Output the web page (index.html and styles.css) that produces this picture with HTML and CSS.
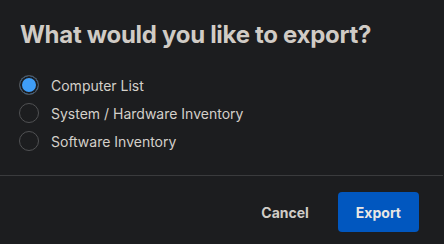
FILE: index.html
```html
<!DOCTYPE html>
<html>
<head>
<meta charset="utf-8">
<link rel="stylesheet" href="styles.css">
</head>
<body>
<div class="dialog">
  <div class="body">
    <h1 class="title">What would you like to export?</h1>
    <div class="options">
      <label class="option"><span class="radio checked"></span><span class="label">Computer List</span></label>
      <label class="option"><span class="radio"></span><span class="label">System / Hardware Inventory</span></label>
      <label class="option"><span class="radio"></span><span class="label">Software Inventory</span></label>
    </div>
  </div>
  <div class="footer">
    <button class="btn btn-text">Cancel</button>
    <button class="btn btn-primary">Export</button>
  </div>
</div>
</body>
</html>
```
FILE: styles.css
```css
html, body {
  margin: 0;
  padding: 0;
  background: #1c1d1f;
  font-family: Inter, "Noto Sans", sans-serif;
}
.dialog {
  width: 443px;
  height: 244px;
  display: flex;
  flex-direction: column;
}
.body {
  padding: 19px 20px 20px;
  border-bottom: 1px solid #3a3b3d;
}
.title {
  margin: 0;
  font-size: 24px;
  line-height: 32px;
  font-weight: 700;
  letter-spacing: -0.3px;
  color: #d0cbc5;
}
.options {
  margin-top: 20px;
  display: flex;
  flex-direction: column;
}
.option {
  height: 28px;
  display: flex;
  align-items: center;
  gap: 12px;
}
.radio {
  box-sizing: border-box;
  width: 20px;
  height: 20px;
  border-radius: 50%;
  border: 1.5px solid #505153;
  margin-left: -1px;
}
.radio.checked {
  background: #3f9ef8;
  box-shadow: inset 0 0 0 2px #1c1d1f;
}
.label {
  font-size: 14px;
  color: #d4d0ca;
}
.footer {
  display: flex;
  justify-content: flex-end;
  align-items: center;
  gap: 11px;
  padding: 16px 24px 0;
}
.btn {
  height: 40px;
  padding: 0 18px;
  border: none;
  border-radius: 4px;
  font-family: Inter, "Noto Sans", sans-serif;
  font-size: 14px;
  font-weight: 700;
}
.btn-text {
  background: transparent;
  color: #d0ccc6;
}
.btn-primary {
  background: #0157bf;
  color: #e9e7e4;
}
```
